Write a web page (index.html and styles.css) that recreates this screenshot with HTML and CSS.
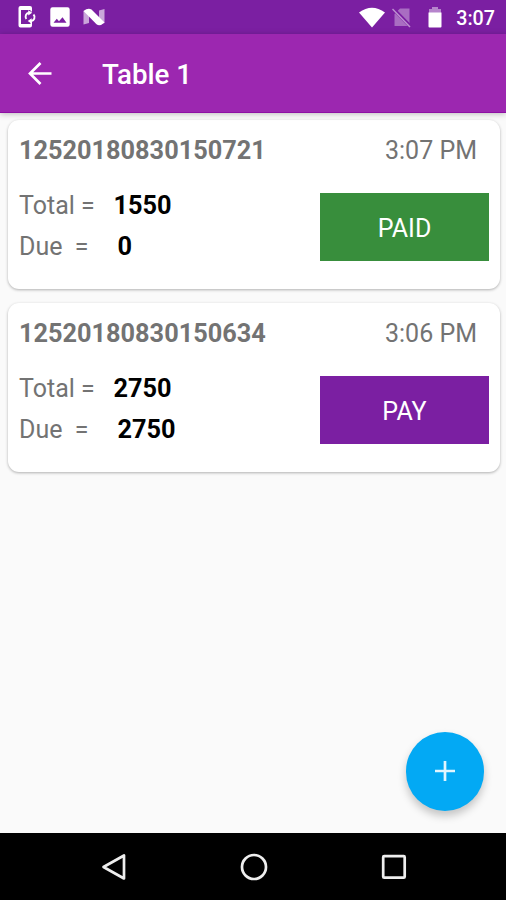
FILE: index.html
```html
<!DOCTYPE html>
<html lang="en">
<head>
  <meta charset="UTF-8" />
  <meta name="viewport" content="width=device-width, initial-scale=1.0" />
  <title>Table 1</title>
  <link rel="stylesheet" href="styles.css">
</head>
<body>
  <!-- Status bar -->
  <div class="status-bar">
    <div class="status-left">
      <svg width="20" height="24" viewBox="0 0 20 24">
        <path d="M3.500 1h9.500a2 2 0 0 1 2 2v3.500h-1.500V5H4v14h9.500v-2H15v3.500a2 2 0 0 1-2 2H3.500a2 2 0 0 1-2-2V3a2 2 0 0 1 2-2z" fill="#fff" />
        <path d="M9.300 14a4 4 0 0 1 2.500-6.200M16.500 9.500a4 4 0 0 1-2.500 6.700" fill="none" stroke="#fff" stroke-width="1.900" />
        <path d="M11.200 5.200l4 2.600-4 2.800zM14.700 13.300l-4 2.700 4 2.800z" fill="#fff" />
      </svg>
      <svg width="20" height="20" viewBox="0 0 20 20">
        <path fill="#fff" fill-rule="evenodd" d="M2.500.3h15a2.200 2.200 0 0 1 2.200 2.200v15a2.200 2.200 0 0 1-2.200 2.200h-15A2.200 2.200 0 0 1 .3 17.500v-15A2.200 2.200 0 0 1 2.500.3zM3.500 15.800h13L12.500 10.300 9 14.300 6.800 11.700z" />
      </svg>
      <svg width="22" height="18" viewBox="0 0 22 18">
        <path d="M.5 3L6 1.500V15L.5 16.500zM16 2.500L21.500 1v14L16 16.500z" fill="#fff" opacity=".6" />
        <path d="M.5 3Q5-.5 8.500 1.500L21.500 14.500Q17 18.700 13.500 16.300z" fill="#fff" />
      </svg>
    </div>
    <div class="status-right">
      <svg class="wifi" width="26" height="21" viewBox="0 0 26 21">
        <path d="M0 5.500Q13-4 26 5.500L13 20.500z" fill="#fff" />
      </svg>
      <svg class="sim" width="20" height="21" viewBox="0 0 20 21">
        <path d="M8 1.500h9.500v17.500h-15V7z" fill="#fff" opacity=".35" />
        <path d="M1 1.500L18.500 19.500" stroke="#7b1fa2" stroke-width="3.500" />
        <path d="M.5 2L18 20" stroke="#fff" stroke-width="1.500" opacity=".5" />
      </svg>
      <svg class="battery" width="14" height="21" viewBox="0 0 14 21">
        <path d="M4 0h6v2h3v4H1V2h3z" fill="#fff" opacity=".45" />
        <path d="M.5 5.500h13v14a1 1 0 0 1-1 1h-11a1 1 0 0 1-1-1z" fill="#fff" />
      </svg>
      <span class="clock">3:07</span>
    </div>
  </div>

  <!-- Toolbar -->
  <header class="toolbar">
    <svg class="back" width="24" height="24" viewBox="0 0 24 24">
      <path d="M12.500 2L2 12.500 12.500 23M2 12.500h21.500" fill="none" stroke="#fff" stroke-width="2.700" />
    </svg>
    <h1>Table 1</h1>
  </header>

  <main>
    <section class="card">
      <div class="card-top">
        <span class="order-id">12520180830150721</span>
        <span class="time">3:07 PM</span>
      </div>
      <div class="card-bottom">
        <div class="amounts">
          <div class="row"><span class="label">Total =</span><b>1550</b></div>
          <div class="row due"><span class="label">Due&nbsp; =</span><b>0</b></div>
        </div>
        <button class="paid">PAID</button>
      </div>
    </section>

    <section class="card">
      <div class="card-top">
        <span class="order-id">12520180830150634</span>
        <span class="time">3:06 PM</span>
      </div>
      <div class="card-bottom">
        <div class="amounts">
          <div class="row"><span class="label">Total =</span><b>2750</b></div>
          <div class="row due"><span class="label">Due&nbsp; =</span><b>2750</b></div>
        </div>
        <button class="pay">PAY</button>
      </div>
    </section>

    <button class="fab" aria-label="Add">
      <svg width="20" height="20" viewBox="0 0 20 20">
        <path d="M10 0v20M0 10h20" stroke="#e1f5fe" stroke-width="2.700" />
      </svg>
    </button>
  </main>

  <!-- Navigation bar -->
  <nav class="nav-bar">
    <svg width="28" height="28" viewBox="0 0 28 28">
      <path d="M24 2.500v23L3.500 14z" fill="none" stroke="#eee" stroke-width="2.700" stroke-linejoin="round" />
    </svg>
    <svg width="28" height="28" viewBox="0 0 28 28">
      <circle cx="14" cy="14" r="12" fill="none" stroke="#eee" stroke-width="2.700" />
    </svg>
    <svg width="28" height="28" viewBox="0 0 28 28">
      <rect x="3.200" y="3.200" width="21.500" height="21.500" rx="1" fill="none" stroke="#eee" stroke-width="2.700" />
    </svg>
  </nav>
</body>
</html>
```
FILE: styles.css
```css
* {
  box-sizing: border-box;
}

body {
  margin: 0;
  height: 900px;
  display: flex;
  flex-direction: column;
  font-family: Roboto, sans-serif;
  font-size: 25.3px;
  line-height: 30px;
  color: #737373;
  background: #fafafa;
  overflow: hidden;
}

svg {
  display: block;
  flex: none;
}

.status-bar {
  height: 34px;
  padding: 0 11px 0 17px;
  display: flex;
  justify-content: space-between;
  align-items: center;
  background: #7b1fa2;
}

.status-left,
.status-right {
  display: flex;
  align-items: center;
}

.status-left {
  gap: 13px;
}

.sim {
  margin-left: 7px;
}

.battery {
  margin: 0 14px 0 16px;
}

.clock {
  font-size: 19.7px;
  font-weight: 500;
  color: #fff;
  padding-top: 3px;
}

.toolbar {
  height: 79px;
  padding: 0 28px;
  display: flex;
  align-items: center;
  gap: 50px;
  background: #9c27b0;
  border-bottom: 1px solid #8e0fa4;
  box-shadow: 0 1px 6px rgba(0, 0, 0, 0.25);
  z-index: 1;
}

.toolbar h1 {
  margin: 0;
  padding-top: 4px;
  font-size: 27.7px;
  font-weight: 500;
  color: #fff;
}

main {
  flex: 1;
  position: relative;
  padding: 7px 6px 0 8px;
}

.card {
  height: 169px;
  margin-bottom: 14px;
  padding: 16px 11px 0 11px;
  background: #fff;
  border-radius: 11px;
  box-shadow: 0 1px 3px rgba(0, 0, 0, 0.3);
}

.card-top {
  display: flex;
  justify-content: space-between;
  padding-right: 12px;
}

.order-id {
  font-weight: bold;
}

.time,
.label {
  font-size: 25px;
}

.card-bottom {
  display: flex;
  justify-content: space-between;
  padding-top: 27px;
}

.amounts {
  display: flex;
  flex-direction: column;
  gap: 11px;
  margin-top: -2px;
}

.row {
  display: flex;
}

.label {
  width: 94.5px;
}

.due .label {
  width: 98.5px;
}

.row b {
  color: #000;
}

.card button {
  width: 169px;
  height: 68px;
  padding: 3px 0 0;
  border: 0;
  font-family: inherit;
  font-size: 25px;
  color: #fff;
}

.card .paid {
  background: #388e3c;
}

.card .pay {
  background: #7b1fa2;
}

/* Floats over the list */
.fab {
  position: absolute;
  right: 22px;
  bottom: 22.5px;
  width: 78.5px;
  height: 78.5px;
  padding: 0;
  display: flex;
  align-items: center;
  justify-content: center;
  border: 0;
  border-radius: 50%;
  background: #03a9f4;
  box-shadow: 0 5px 9px rgba(0, 0, 0, 0.22);
}

.nav-bar {
  height: 67px;
  padding: 0 98px 0 100px;
  display: flex;
  align-items: center;
  justify-content: space-between;
  background: #000;
}
```
